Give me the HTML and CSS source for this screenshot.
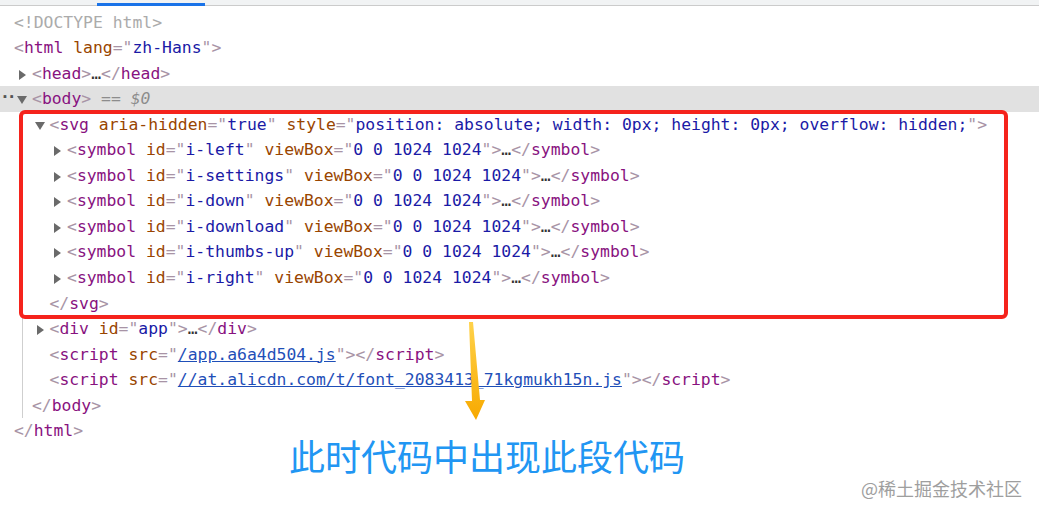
FILE: index.html
```html
<!DOCTYPE html>
<html lang="zh-Hans">
<head>
<meta charset="utf-8">
<title>Elements</title>
<link rel="stylesheet" href="styles.css">
</head>
<body>
<div class="page">
  <div class="toolbar"><span class="tab-active"></span></div>
  <div class="tree">
    <div class="row l0"><span class="tg"></span><span class="dt">&lt;!DOCTYPE html&gt;</span></div>
    <div class="row l0"><span class="tg"></span><span class="b">&lt;</span><span class="t">html</span> <span class="an">lang</span><span class="b">="</span><span class="av">zh-Hans</span><span class="b">"&gt;</span></div>
    <div class="row l1"><span class="tg"><i class="tri closed"></i></span><span class="b">&lt;</span><span class="t">head</span><span class="b">&gt;</span><span class="el">…</span><span class="b">&lt;/</span><span class="t">head</span><span class="b">&gt;</span></div>
    <div class="row l1 sel"><span class="gutter">··</span><span class="tg"><i class="tri open"></i></span><span class="b">&lt;</span><span class="t">body</span><span class="b">&gt;</span><span class="eq"> == <i>$0</i></span></div>
    <div class="kids">
      <div class="row l2"><span class="tg"><i class="tri open"></i></span><span class="b">&lt;</span><span class="t">svg</span> <span class="an">aria-hidden</span><span class="b">="</span><span class="av">true</span><span class="b">"</span> <span class="an">style</span><span class="b">="</span><span class="av">position: absolute; width: 0px; height: 0px; overflow: hidden;</span><span class="b">"&gt;</span></div>
      <div class="row l3"><span class="tg"><i class="tri closed"></i></span><span class="b">&lt;</span><span class="t">symbol</span> <span class="an">id</span><span class="b">="</span><span class="av">i-left</span><span class="b">"</span> <span class="an">viewBox</span><span class="b">="</span><span class="av">0 0 1024 1024</span><span class="b">"&gt;</span><span class="el">…</span><span class="b">&lt;/</span><span class="t">symbol</span><span class="b">&gt;</span></div>
      <div class="row l3"><span class="tg"><i class="tri closed"></i></span><span class="b">&lt;</span><span class="t">symbol</span> <span class="an">id</span><span class="b">="</span><span class="av">i-settings</span><span class="b">"</span> <span class="an">viewBox</span><span class="b">="</span><span class="av">0 0 1024 1024</span><span class="b">"&gt;</span><span class="el">…</span><span class="b">&lt;/</span><span class="t">symbol</span><span class="b">&gt;</span></div>
      <div class="row l3"><span class="tg"><i class="tri closed"></i></span><span class="b">&lt;</span><span class="t">symbol</span> <span class="an">id</span><span class="b">="</span><span class="av">i-down</span><span class="b">"</span> <span class="an">viewBox</span><span class="b">="</span><span class="av">0 0 1024 1024</span><span class="b">"&gt;</span><span class="el">…</span><span class="b">&lt;/</span><span class="t">symbol</span><span class="b">&gt;</span></div>
      <div class="row l3"><span class="tg"><i class="tri closed"></i></span><span class="b">&lt;</span><span class="t">symbol</span> <span class="an">id</span><span class="b">="</span><span class="av">i-download</span><span class="b">"</span> <span class="an">viewBox</span><span class="b">="</span><span class="av">0 0 1024 1024</span><span class="b">"&gt;</span><span class="el">…</span><span class="b">&lt;/</span><span class="t">symbol</span><span class="b">&gt;</span></div>
      <div class="row l3"><span class="tg"><i class="tri closed"></i></span><span class="b">&lt;</span><span class="t">symbol</span> <span class="an">id</span><span class="b">="</span><span class="av">i-thumbs-up</span><span class="b">"</span> <span class="an">viewBox</span><span class="b">="</span><span class="av">0 0 1024 1024</span><span class="b">"&gt;</span><span class="el">…</span><span class="b">&lt;/</span><span class="t">symbol</span><span class="b">&gt;</span></div>
      <div class="row l3"><span class="tg"><i class="tri closed"></i></span><span class="b">&lt;</span><span class="t">symbol</span> <span class="an">id</span><span class="b">="</span><span class="av">i-right</span><span class="b">"</span> <span class="an">viewBox</span><span class="b">="</span><span class="av">0 0 1024 1024</span><span class="b">"&gt;</span><span class="el">…</span><span class="b">&lt;/</span><span class="t">symbol</span><span class="b">&gt;</span></div>
      <div class="row l2"><span class="tg"></span><span class="b">&lt;/</span><span class="t">svg</span><span class="b">&gt;</span></div>
      <div class="row l2"><span class="tg"><i class="tri closed"></i></span><span class="b">&lt;</span><span class="t">div</span> <span class="an">id</span><span class="b">="</span><span class="av">app</span><span class="b">"&gt;</span><span class="el">…</span><span class="b">&lt;/</span><span class="t">div</span><span class="b">&gt;</span></div>
      <div class="row l2"><span class="tg"></span><span class="b">&lt;</span><span class="t">script</span> <span class="an">src</span><span class="b">="</span><span class="lk">/app.a6a4d504.js</span><span class="b">"&gt;&lt;/</span><span class="t">script</span><span class="b">&gt;</span></div>
      <div class="row l2"><span class="tg"></span><span class="b">&lt;</span><span class="t">script</span> <span class="an">src</span><span class="b">="</span><span class="lk">//at.alicdn.com/t/font_2083413_71kgmukh15n.js</span><span class="b">"&gt;&lt;/</span><span class="t">script</span><span class="b">&gt;</span></div>
      <div class="row l1"><span class="tg"></span><span class="b">&lt;/</span><span class="t">body</span><span class="b">&gt;</span></div>
    </div>
    <div class="row l0"><span class="tg"></span><span class="b">&lt;/</span><span class="t">html</span><span class="b">&gt;</span></div>
  </div>
  <div class="caption">此时代码中出现此段代码</div>

  <div class="highlight-box"></div>
  <svg class="arrow" width="30" height="110" viewBox="0 0 30 110" aria-hidden="true">
    <defs>
      <linearGradient id="ag" x1="0" y1="0" x2="0" y2="1">
        <stop offset="0" stop-color="#ffd24a"/>
        <stop offset="1" stop-color="#f7a900"/>
      </linearGradient>
    </defs>
    <polygon points="9,2 13,2 20,80 25,80 16,100 5,81 12,81" fill="url(#ag)"/>
  </svg>
  <div class="watermark">@稀土掘金技术社区</div>
</div>
</body>
</html>
```

FILE: styles.css
```css
html, body {
  margin: 0;
  padding: 0;
  background: #ffffff;
}

.page {
  position: relative;
  width: 1039px;
  height: 515px;
  overflow: hidden;
  font-family: "DejaVu Sans Mono", "Liberation Mono", monospace;
}

.toolbar {
  position: relative;
  height: 5px;
  background: #f1f3f4;
  border-bottom: 1px solid #cbcbcb;
}

.tab-active {
  position: absolute;
  left: 97px;
  top: 3px;
  width: 108px;
  height: 3px;
  background: #1a73e8;
}

.tree {
  padding-top: 3.5px;
  font-size: 16.4px;
  line-height: 25.56px;
}

.row {
  position: relative;
  display: block;
  height: 25.56px;
  white-space: pre;
  color: #222;
}

.l0 { padding-left: 1px; }
.l1 { padding-left: 19px; }
.l2 { padding-left: 36.5px; }
.l3 { padding-left: 54px; }

.kids {
  margin-left: 22px;
  border-left: 1px solid #cfcfcf;
}

.kids .row {
  margin-left: -23px;
}

.sel {
  background: #e1e1e1;
}

.gutter {
  position: absolute;
  left: 0;
  top: -2px;
  color: #555;
  font-weight: bold;
  letter-spacing: -3px;
}

.tg {
  display: inline-block;
  width: 13px;
  height: 10px;
  vertical-align: -1px;
}

.tri {
  display: block;
  width: 0;
  height: 0;
}

.tri.closed {
  border-left: 7px solid #6a6a6a;
  border-top: 5px solid transparent;
  border-bottom: 5px solid transparent;
}

.tri.open {
  margin-left: -2px;
  margin-top: 1px;
  border-top: 8px solid #6a6a6a;
  border-left: 5px solid transparent;
  border-right: 5px solid transparent;
}

.dt { color: #ababab; }
.b  { color: #a894a6; }
.t  { color: #881280; }
.an { color: #994500; }
.av { color: #1a1aa6; }
.el { color: #333333; }
.lk {
  color: #1f4fb8;
  text-decoration: underline;
}

.eq {
  color: #8c8c8c;
}

.eq i {
  font-style: italic;
}

.caption {
  margin: -9px 0 0 289px;
  font-family: "Noto Sans CJK SC", sans-serif;
  font-size: 36px;
  line-height: 40px;
  color: #2196f3;
}

.highlight-box {
  position: absolute;
  left: 19px;
  top: 110px;
  width: 981px;
  height: 201px;
  border: 4.5px solid #f5231c;
  border-radius: 6px;
  pointer-events: none;
}

.arrow {
  position: absolute;
  left: 460px;
  top: 320px;
}

.watermark {
  position: absolute;
  right: 17px;
  top: 476px;
  font-family: "Noto Sans CJK SC", sans-serif;
  font-size: 18px;
  line-height: 24px;
  color: #9e9e9e;
}
```
